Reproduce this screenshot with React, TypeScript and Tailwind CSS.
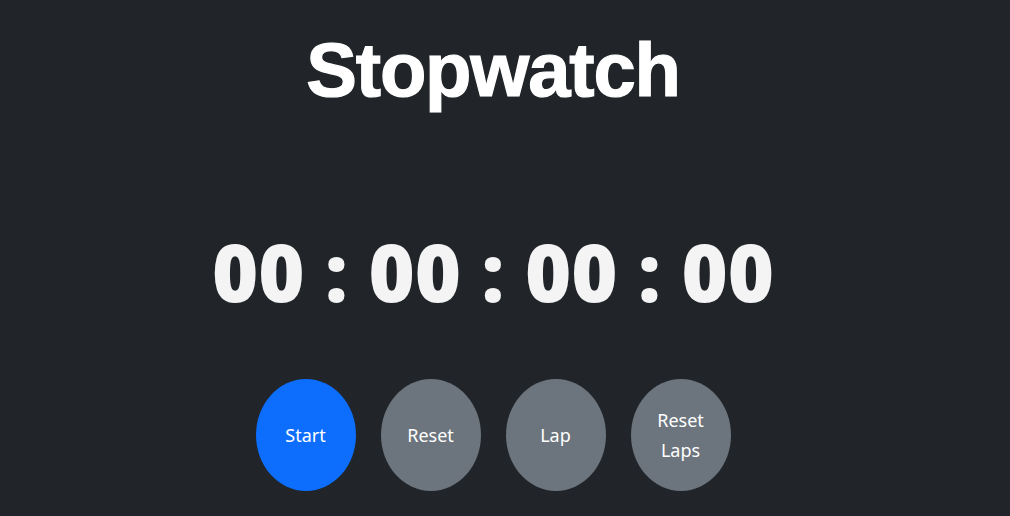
const buttons = [
  { label: 'Start', tone: 'bg-[#0d6efd]' },
  { label: 'Reset', tone: 'bg-[#6c757d]' },
  { label: 'Lap', tone: 'bg-[#6c757d]' },
  { label: 'Reset Laps', tone: 'bg-[#6c757d]' },
]

export default function App() {
  return (
    <div className="h-[516px] w-[1010px] overflow-hidden bg-[#212529]">
      <div className="flex w-[986px] flex-col items-center">
        <h1 className="pt-[32px] text-[76px] font-bold leading-none tracking-[-1.2px] text-white [-webkit-text-stroke:1.2px_white] [font-family:'Liberation_Sans',Arial,sans-serif]">
          Stopwatch
        </h1>

        <div className="mt-[124px] text-[79px] font-extrabold leading-none text-[#f4f4f4] [font-family:'Open_Sans',sans-serif]">
          00 : 00 : 00 : 00
        </div>

        <div className="mt-[68px] flex gap-[25px]">
          {buttons.map((b) => (
            <button
              key={b.label}
              className={`flex h-[112px] w-[100px] items-center justify-center rounded-[50%] px-6 text-center text-[18px] leading-[30px] text-white [font-family:'Noto_Sans',sans-serif] ${b.tone}`}
            >
              {b.label}
            </button>
          ))}
        </div>
      </div>
    </div>
  )
}
